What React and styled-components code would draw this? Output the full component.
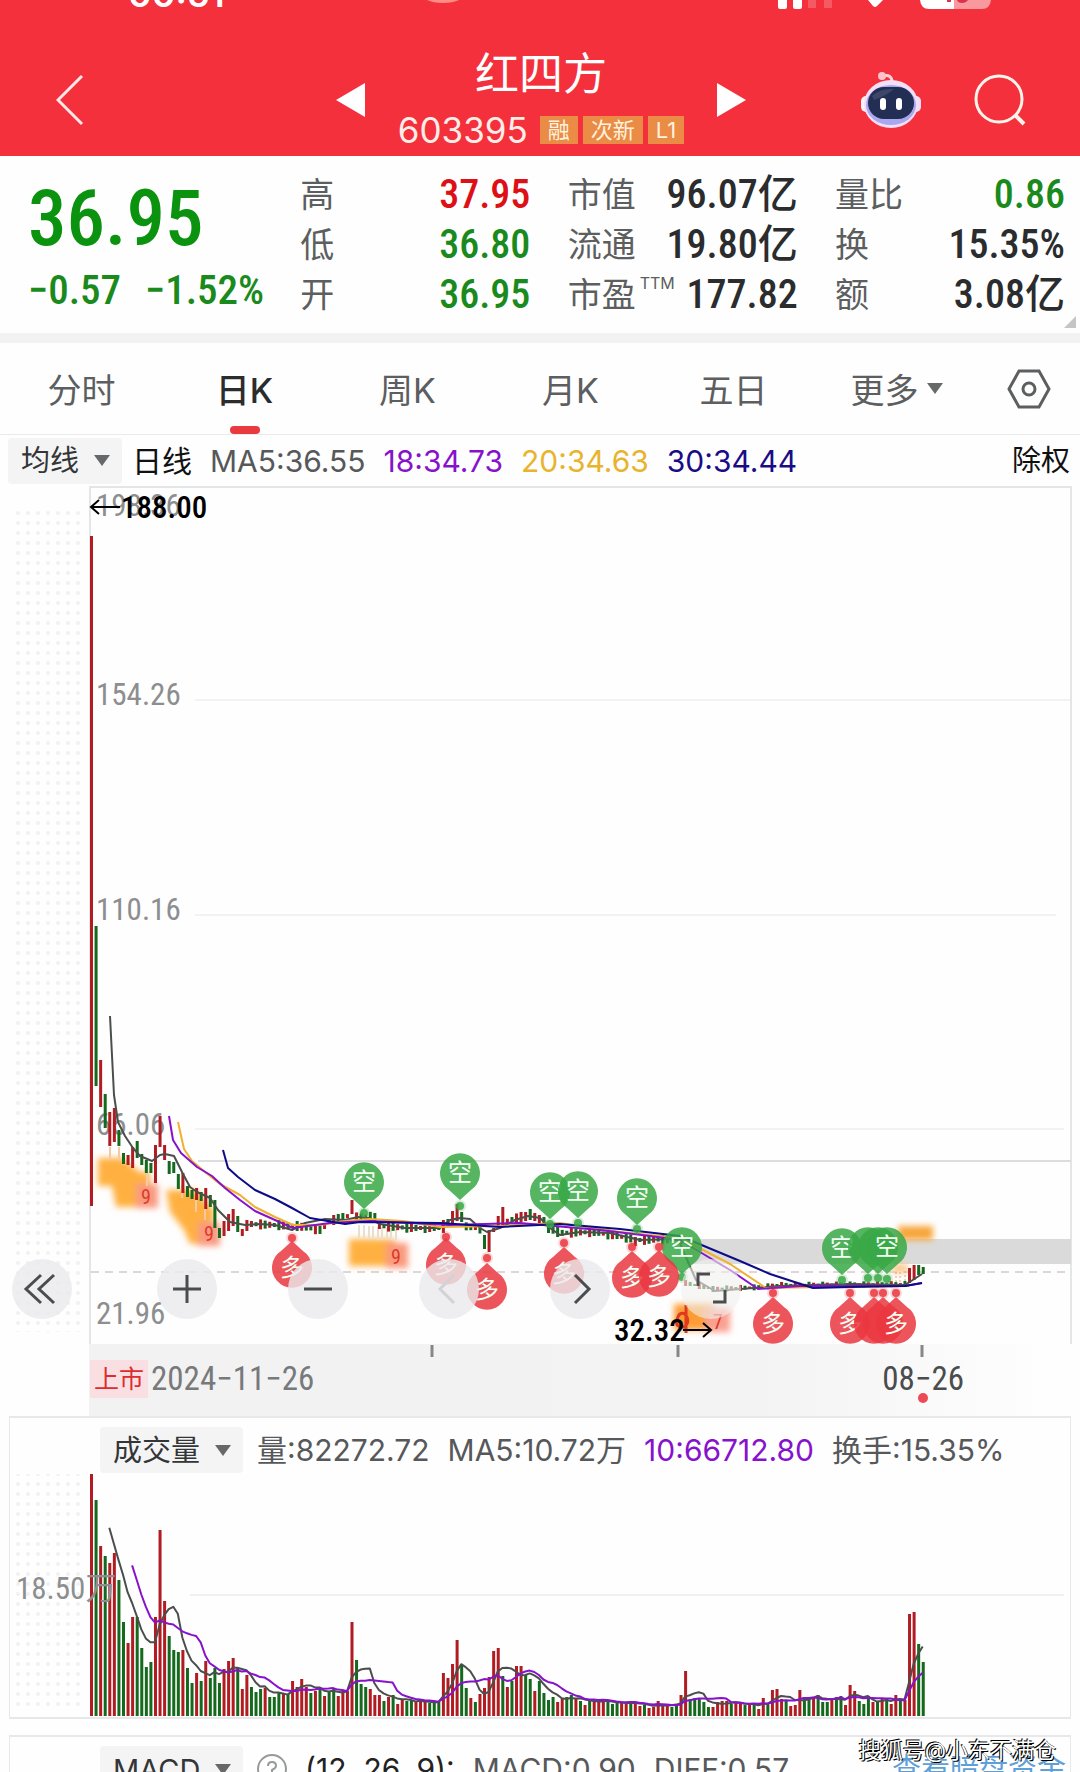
import React from "react";
import styled, { createGlobalStyle } from "styled-components";

const GlobalStyle = createGlobalStyle`
    * {
        box-sizing: border-box;
    }

    body {
        margin: 0;
        background: #fefefe;
        color: #4c4c4e;
        font-family: Inter, "Noto Sans CJK SC", sans-serif;
    }

    button,
    select {
        margin: 0;
        padding: 0;
        border: 0;
        background: none;
        color: inherit;
        font: inherit;
    }
`;

const RED = "#b01c22";
const GREEN = "#14691c";

const BAR_START = 91;
const BAR_STEP = 4.57;
const barX = (i) => BAR_START + i * BAR_STEP;

// high / low / colour of the first trading days
const firstDays = [
    [536, 1206, "r"], [926, 1086, "g"], [1060, 1107, "r"], [1094, 1128, "g"], [1112, 1146, "r"],
    [1108, 1142, "r"], [1130, 1146, "g"], [1153, 1164, "g"], [1155, 1165, "r"], [1147, 1168, "r"],
    [1141, 1158, "g"], [1154, 1165, "g"], [1160, 1173, "g"], [1163, 1173, "g"], [1145, 1183, "r"],
    [1116, 1147, "r"], [1145, 1160, "r"], [1161, 1174, "g"], [1162, 1173, "g"], [1174, 1189, "g"],
    [1173, 1193, "r"], [1186, 1197, "g"], [1190, 1199, "g"], [1188, 1200, "r"], [1192, 1201, "g"],
    [1188, 1209, "r"], [1195, 1207, "g"], [1200, 1228, "g"], [1228, 1238, "g"], [1221, 1236, "r"],
    [1214, 1231, "r"], [1209, 1226, "r"], [1216, 1232, "g"], [1229, 1236, "r"], [1220, 1231, "r"],
];

const specialDays = {
    57: [1200, 1214, "r"],
    77: [1220, 1233, "r"],
    79: [1211, 1223, "r"],
    80: [1204, 1221, "r"],
    81: [1212, 1222, "g"],
    86: [1235, 1249, "g"],
    87: [1230, 1252, "r"],
    89: [1216, 1227, "r"],
    90: [1207, 1225, "r"],
    94: [1212, 1222, "r"],
    95: [1212, 1221, "r"],
    96: [1209, 1220, "g"],
    97: [1213, 1221, "r"],
    100: [1225, 1233, "g"],
    102: [1227, 1237, "g"],
    119: [1237, 1246, "r"],
    179: [1268, 1283, "r"],
    180: [1265, 1280, "r"],
    181: [1265, 1275, "g"],
    182: [1267, 1274, "g"],
};

const trend = [
    [35, 1224], [45, 1226], [50, 1230], [52, 1222], [55, 1216], [62, 1217], [63, 1226], [70, 1228],
    [76, 1228], [78, 1223], [84, 1228], [88, 1230], [92, 1219], [96, 1217], [99, 1220], [102, 1233],
    [110, 1232], [120, 1240], [129, 1239], [130, 1283], [136, 1289], [147, 1287], [150, 1285], [179, 1284],
];

const trendAt = (i) => {
    const n = trend.findIndex(([day]) => day > i);
    const [d0, y0] = trend[Math.max(n - 1, 0)];
    const [d1, y1] = trend[n];
    return y0 + ((y1 - y0) * (i - d0)) / (d1 - d0);
};

const candles = Array.from({ length: 183 }, (_, i) => {
    if (i < firstDays.length) return firstDays[i];
    if (specialDays[i]) return specialDays[i];
    const mid = trendAt(i);
    const half = i < 130 ? 2 + ((i * 7) % 4) : 1 + ((i * 5) % 3);
    return [mid - half, mid + half, (i * 11) % 7 < 3 ? "r" : "g"];
});

// traded volume, one letter for the day's direction
const volumes = (
    "242r 216g 170r 160g 153r 163r 136g 94g 73r 99r 99g 68g 49g 54g 99r 186r 115r 80g 66g 64g 66r 48g 33g 43r 35g 55r " +
    "38g 48g 33g 47r 55r 58r 48g 27r 41r 29g 24g 27g 28r 19g 19g 24g 23r 22g 35r 29r 37r 29r 23g 25r 29g 20r 25g " +
    "27g 20r 25r 25r 94r 56g 32g 29g 27r 21r 21r 15g 19r 21g 12r 17r 15g 15g 14r 15r 14r 13g 13g 14g 43r 38r 52r " +
    "76r 50g 28g 18r 14g 22r 28r 39r 65r 68r 40g 29r 35g 50r 50r 41g 37g 25r 35g 23g 16g 19g 14r 17r 19g 21g 17r " +
    "15g 11r 15g 17r 15r 15r 14g 12g 13g 13r 13r 14g 13r 10r 11g 8r 9r 15r 11r 10r 9g 12g 21r 45r 17g 18g " +
    "18g 14g 9g 9r 14r 15r 15r 12g 13r 12r 11g 12r 12g 7r 18r 12g 26r 27r 17r 15g 10r 11r 26r 17g 18g 19r 21g 14g " +
    "14g 17r 19g 20g 11r 31r 25r 15g 12g 17g 14r 14g 18r 17g 12r 21r 17g 16r 102r 104r 72g 54g"
)
    .split(" ")
    .map((day) => ({ size: parseInt(day, 10), up: day.endsWith("r") }));

const VOLUME_BASE = 1715;

const volumeAverage = (days) =>
    volumes
        .map((_, i) => {
            if (i < days - 1) return null;
            const sum = volumes.slice(i - days + 1, i + 1).reduce((total, v) => total + v.size, 0);
            return `${barX(i).toFixed(1)},${(VOLUME_BASE - sum / days).toFixed(1)}`;
        })
        .filter(Boolean)
        .join(" ");

const averages = [
    {
        color: "#4a4f4c",
        points:
            "110,1016 114,1095 118,1122 125,1136 133,1148 140,1156 152,1161 160,1155 165,1154 174,1156 182,1172 190,1187 197,1192 210,1198 218,1210 230,1222 245,1225 260,1224 275,1225 292,1230 305,1223 325,1219 345,1220 358,1217 368,1218 380,1224 405,1228 440,1228 450,1220 460,1218 470,1219 480,1228 487,1232 500,1228 515,1220 528,1216 540,1218 550,1228 560,1235 580,1232 610,1233 640,1240 678,1239 696,1280 715,1291 740,1289 780,1286 810,1285 850,1284 905,1285 922,1274",
    },
    {
        color: "#f0b030",
        points:
            "178,1122 184,1149 192,1161 205,1172 220,1184 240,1195 255,1207 275,1217 293,1225 320,1225 345,1221 370,1219 403,1221 440,1227 500,1226 560,1223 620,1232 680,1238 730,1264 766,1288 820,1287 905,1286",
    },
    {
        color: "#8712cc",
        points:
            "169,1116 173,1140 181,1153 197,1167 212,1176 225,1188 240,1200 255,1211 275,1220 293,1228 330,1223 370,1221 450,1225 520,1223 600,1230 650,1236 680,1240 730,1270 758,1289 800,1286 905,1286 922,1283",
    },
    {
        color: "#0c0c86",
        points:
            "223,1150 228,1168 238,1177 255,1190 275,1199 292,1208 310,1218 345,1224 360,1222 440,1223 500,1227 560,1224 620,1229 680,1236 740,1261 770,1274 813,1288 850,1287 905,1286 922,1283",
    },
];

const bearPins = [
    [364, 1182, 1213], [460, 1173, 1206], [550, 1192, 1224], [578, 1191, 1223], [637, 1198, 1229],
    [682, 1247, 1277], [842, 1248, 1280], [868, 1247, 1278, true], [878, 1247, 1278, true], [887, 1247, 1279],
];

const bullPins = [
    [292, 1268, 1238], [446, 1265, 1237], [487, 1290, 1258], [564, 1274, 1243], [632, 1278, 1247], [659, 1277, 1247],
    [773, 1324, 1293], [850, 1324, 1293], [874, 1324, 1293, true], [883, 1324, 1293, true], [896, 1324, 1293],
];

const stats = [
    [
        { label: "高", value: "37.95", color: "#dc1016" },
        { label: "低", value: "36.80", color: "#1a8a1c" },
        { label: "开", value: "36.95", color: "#1a8a1c" },
    ],
    [
        { label: "市值", value: "96.07亿" },
        { label: "流通", value: "19.80亿" },
        { label: "市盈", note: "TTM", value: "177.82" },
    ],
    [
        { label: "量比", value: "0.86", color: "#1a8a1c" },
        { label: "换", value: "15.35%" },
        { label: "额", value: "3.08亿" },
    ],
];

const tabs = ["分时", "日K", "周K", "月K", "五日"];

const Pin = ({ x, y, dot, bull, plain }) => {
    const dir = bull ? -1 : 1;
    return (
        <g fill={bull ? "#ea3740" : "#38a845"} fillOpacity="0.85">
            <circle cx={x} cy={dot} r="6" fillOpacity="0.2" />
            <circle cx={x} cy={dot} r="4" />
            <path
                d={`M${x} ${y + dir * 27} L${x - 11} ${y + dir * 17} A20 20 0 1 ${bull ? 0 : 1} ${x + 11} ${y + dir * 17} Z`}
            />
            {!plain && (
                <PinText x={x} y={y + 8}>
                    {bull ? "多" : "空"}
                </PinText>
            )}
        </g>
    );
};

const Caret = () => (
    <svg width="16" height="11" viewBox="0 0 16 11" aria-hidden="true">
        <path d="M0 0H16L8 11Z" fill="#66686a" />
    </svg>
);

const Picker = ({ label, option }) => (
    <PickerWrapper>
        <select aria-label={label}>
            <option>{option}</option>
        </select>
        <Caret />
    </PickerWrapper>
);

const RobotIcon = () => (
    <svg width="62" height="58" viewBox="0 0 62 58" aria-hidden="true">
        <path d="M23 5Q32 3 32 11" fill="none" stroke="#ffd3d8" strokeWidth="3" />
        <circle cx="22" cy="5" r="4" fill="#ffc4cb" />
        <rect x="1" y="25" width="10" height="16" rx="5" fill="#fff0f6" />
        <rect x="51" y="25" width="10" height="16" rx="5" fill="#f1ddf8" />
        <ellipse cx="31" cy="33" rx="27" ry="24" fill="#f3dff6" />
        <ellipse cx="31" cy="34" rx="25" ry="20" fill="#a9a7ee" />
        <rect x="8" y="16" width="46" height="32" rx="16" fill="#222e54" />
        <path d="M12 25Q20 17 34 18Q26 25 14 29Z" fill="#3c4668" />
        <rect x="20" y="27" width="6" height="12" rx="3" fill="#fff" />
        <rect x="36" y="27" width="6" height="12" rx="3" fill="#fff" />
    </svg>
);

const Signals = () => (
    <svg width="216" height="9" viewBox="776 0 216 9" aria-hidden="true">
        <path d="M778 0H787V7Q787 9 785 9H780Q778 9 778 7ZM793 0H802V7Q802 9 800 9H795Q793 9 793 7Z" fill="#fff" />
        <path d="M808 0H816V8H808ZM824 0H832V8H824Z" fill="#fff" opacity="0.2" />
        <path d="M868 0H883L877 6Q875 8 873 6Z" fill="#fff" />
        <path d="M920 0H954V9H929Q921 9 920 0Z" fill="#fff" />
        <path d="M954 0H991Q990 9 982 9H954Z" fill="#fff" opacity="0.5" />
        <path d="M947 0H951V2H947ZM957 0H968Q966 3 962 3Q958 3 957 0Z" fill="#d9344c" />
    </svg>
);

const Recorder = () => (
    <svg width="32" height="4" viewBox="0 0 32 4" aria-hidden="true">
        <path d="M0 0H32Q26 3 16 3Q6 3 0 0Z" fill="#ff8d84" />
    </svg>
);

const PriceChart = () => (
    <ChartSvg viewBox="0 486 1080 858" role="img" aria-label="日K">
        <defs>
            <pattern id="dots" x="15" y="500" width="10" height="10" patternUnits="userSpaceOnUse">
                <circle cx="3" cy="3" r="2" fill="#f1f1f2" />
            </pattern>
            <filter id="soft" x="-20%" y="-20%" width="140%" height="140%">
                <feGaussianBlur stdDeviation="3" />
            </filter>
        </defs>
        <rect x="14" y="510" width="72" height="822" fill="url(#dots)" />
        <path d="M90 1344V487H1071V1344" fill="none" stroke="#e4e5e6" strokeWidth="2" />
        <path d="M195 700H1070M195 915H1056M195 1129H1064" stroke="#f3f1f2" strokeWidth="2" />
        <path d="M198 1161H1071" stroke="#dcdddd" strokeWidth="2" />
        <rect x="686" y="1239" width="385" height="25" fill="#dadada" />
        <path d="M91 1272H1070" stroke="#ddd7d7" strokeWidth="2" strokeDasharray="8 6" />

        <AxisText x="96" y="516">198.36</AxisText>
        <AxisText x="96" y="705">154.26</AxisText>
        <AxisText x="96" y="920">110.16</AxisText>
        <AxisText x="96" y="1135">66.06</AxisText>
        <AxisText x="96" y="1324">21.96</AxisText>

        <g filter="url(#soft)">
            <path d="M98 1158H122L140 1172H150V1207H116L112 1186H98Z" fill="#ffb040" />
            <rect x="136" y="1184" width="22" height="24" fill="#f99a80" />
            <path d="M166 1190H196L215 1212L206 1244H190L184 1230L170 1212Z" fill="#ffb040" />
            <rect x="198" y="1222" width="22" height="24" fill="#f99a80" />
            <rect x="349" y="1239" width="46" height="27" fill="#ffb040" />
            <rect x="386" y="1243" width="22" height="25" fill="#fa9a7c" />
            <rect x="674" y="1304" width="40" height="26" fill="#fd9c34" />
            <rect x="706" y="1308" width="24" height="24" fill="#f9a090" />
            <rect x="898" y="1226" width="35" height="14" fill="#f7a63a" />
            <rect x="892" y="1264" width="16" height="9" fill="#fbc78d" />
        </g>
        <path
            d="M110 1147V1160M119 1147V1160M147 1172V1186M156 1176V1186M196 1200V1212M205 1208V1220M182 1185V1198"
            stroke="#f6c9a4"
            strokeWidth="2"
        />
        <path
            d="M359 1225V1238M364 1225V1238M369 1226V1239M373 1226V1239M378 1227V1240M382 1227V1240M387 1228V1240M391 1228V1240M396 1229V1240"
            stroke="#e9dfce"
            strokeWidth="2"
        />
        <path
            d="M896 1272V1283M900 1272V1283M905 1271V1283"
            stroke="#e8a07a"
            strokeWidth="1"
            strokeDasharray="2 2"
        />
        <MarkText x="146" y="1204">9</MarkText>
        <MarkText x="209" y="1241">9</MarkText>
        <MarkText x="396" y="1264">9</MarkText>
        <MarkText x="718" y="1329">7</MarkText>
        <path
            d="M677 1320Q679 1311 685 1314Q691 1322 684 1327Q675 1328 677 1320M686 1305V1333"
            fill="none"
            stroke="#dd3a1e"
            strokeWidth="3"
        />

        {candles.map(([high, low, dir], i) => (
            <rect key={i} x={barX(i) - 1} y={high} width="3" height={low - high} fill={dir === "r" ? RED : GREEN} />
        ))}
        {averages.map((line) => (
            <polyline
                key={line.color}
                points={line.points}
                fill="none"
                stroke={line.color}
                strokeWidth="2"
                strokeLinejoin="round"
            />
        ))}
        {bearPins.map(([x, y, dot, plain]) => (
            <Pin key={x} x={x} y={y} dot={dot} plain={plain} />
        ))}
        {bullPins.map(([x, y, dot, plain]) => (
            <Pin key={x} x={x} y={y} dot={dot} plain={plain} bull />
        ))}

        <path d="M91 507H120M99 500L91 507L99 514" fill="none" stroke="#000" strokeWidth="2" />
        <PeakText x="121" y="518">188.00</PeakText>
        <path d="M683 1330H711M703 1323L711 1330L703 1337" fill="none" stroke="#000" strokeWidth="2" />
        <PeakText x="614" y="1341">32.32</PeakText>
    </ChartSvg>
);

const VolumeChart = () => (
    <ChartSvg viewBox="10 1473 1060 243" role="img" aria-label="成交量">
        <rect x="14" y="1473" width="72" height="236" fill="url(#dots)" />
        <path d="M190 1594H1064" stroke="#f3efef" strokeWidth="2" />
        {volumes.map((v, i) => (
            <rect
                key={i}
                x={barX(i) - 1}
                y={VOLUME_BASE - v.size}
                width="3"
                height={v.size}
                fill={v.up ? RED : GREEN}
            />
        ))}
        <AxisText x="16" y="1598">18.50万</AxisText>
        <polyline points={volumeAverage(5)} fill="none" stroke="#4a4f4c" strokeWidth="2" strokeLinejoin="round" />
        <polyline points={volumeAverage(10)} fill="none" stroke="#8712cc" strokeWidth="2" strokeLinejoin="round" />
    </ChartSvg>
);

const controls = [
    { label: "最早", d: "M24 11L9 25L24 39M37 11L22 25L37 39" },
    { label: "放大", d: "M25 11V39M11 25H39" },
    { label: "缩小", d: "M11 25H39" },
    { label: "上一段", d: "M30 11L16 25L30 39", faint: true },
    { label: "下一段", d: "M20 11L34 25L20 39" },
    { label: "全屏", d: "M12 22V10H24M39 26V38H27", bare: true },
];

const App = () => {
    const [tab, setTab] = React.useState("日K");

    return (
        <Page>
            <GlobalStyle />
            <Header>
                <StatusBar>
                    <Clock>00:51</Clock>
                    <Recorder />
                    <Signals />
                </StatusBar>
                <NavBar>
                    <IconButton aria-label="返回">
                        <svg width="28" height="52" viewBox="0 0 28 52">
                            <path d="M26 2L2 26L26 50" fill="none" stroke="#ffe9ea" strokeWidth="3" />
                        </svg>
                    </IconButton>
                    <Switcher>
                        <IconButton aria-label="上一只">
                            <svg width="30" height="34" viewBox="0 0 30 34">
                                <path d="M29 0V34L0 17Z" fill="#fff" />
                            </svg>
                        </IconButton>
                        <div>
                            <StockName>红四方</StockName>
                            <StockMeta>
                                <StockCode>603395</StockCode>
                                <Badge>融</Badge>
                                <Badge>次新</Badge>
                                <Badge>L1</Badge>
                            </StockMeta>
                        </div>
                        <IconButton aria-label="下一只">
                            <svg width="30" height="34" viewBox="0 0 30 34">
                                <path d="M1 0V34L30 17Z" fill="#fff" />
                            </svg>
                        </IconButton>
                    </Switcher>
                    <Actions>
                        <IconButton aria-label="助手">
                            <RobotIcon />
                        </IconButton>
                        <IconButton aria-label="搜索">
                            <svg width="52" height="52" viewBox="0 0 52 52">
                                <circle cx="25" cy="25" r="23" fill="none" stroke="#fff4ec" strokeWidth="3" />
                                <path d="M41 41L50 50" stroke="#fff4ec" strokeWidth="4" />
                            </svg>
                        </IconButton>
                    </Actions>
                </NavBar>
            </Header>

            <Quote>
                <PriceBlock>
                    <Price>36.95</Price>
                    <Change>
                        <span>−0.57</span>
                        <span>−1.52%</span>
                    </Change>
                </PriceBlock>
                {stats.map((column) => (
                    <StatColumn key={column[0].label}>
                        {column.map((stat) => (
                            <Stat key={stat.label}>
                                <dt>
                                    {stat.label}
                                    {stat.note && <Note>{stat.note}</Note>}
                                </dt>
                                <StatValue $color={stat.color}>{stat.value}</StatValue>
                            </Stat>
                        ))}
                    </StatColumn>
                ))}
                <Corner />
            </Quote>

            <Tabs>
                {tabs.map((name) => (
                    <Tab key={name} $active={name === tab} onClick={() => setTab(name)}>
                        {name}
                    </Tab>
                ))}
                <Tab>
                    更多
                    <Caret />
                </Tab>
                <Tab aria-label="设置">
                    <svg width="44" height="40" viewBox="0 0 44 40">
                        <path d="M12 2H32L42 20L32 38H12L2 20Z" fill="none" stroke="#5c5e60" strokeWidth="3" />
                        <circle cx="22" cy="20" r="6" fill="none" stroke="#5c5e60" strokeWidth="3" />
                    </svg>
                </Tab>
            </Tabs>

            <Indicators>
                <Picker label="指标" option="均线" />
                <Readings>
                    <Reading $color="#111">日线</Reading>
                    <Reading>MA5:36.55</Reading>
                    <Reading $color="#8712cc">18:34.73</Reading>
                    <Reading $color="#e8b42c">20:34.63</Reading>
                    <Reading $color="#1a0c86">30:34.44</Reading>
                </Readings>
                <AdjustButton>除权</AdjustButton>
            </Indicators>

            <ChartArea>
                <PriceChart />
                <Controls>
                    {controls.map((c) => (
                        <Control key={c.label} aria-label={c.label} $bare={c.bare}>
                            <svg width="50" height="50" viewBox="0 0 50 50">
                                <path d={c.d} fill="none" stroke={c.faint ? "#d2d2d4" : "#4a4c4e"} strokeWidth="3" />
                            </svg>
                        </Control>
                    ))}
                </Controls>
            </ChartArea>

            <DateAxis>
                <Ticks viewBox="0 0 1080 14" aria-hidden="true">
                    <path d="M432 1V13M678 1V13M922 1V13" stroke="#85888a" strokeWidth="3" />
                </Ticks>
                <Dates>
                    <ListedBadge>上市</ListedBadge>
                    <DateText>2024−11−26</DateText>
                    <LastDate>08−26</LastDate>
                </Dates>
            </DateAxis>

            <Panel>
                <PanelHead>
                    <Picker label="副图一" option="成交量" />
                    <Readings>
                        <Reading>量:82272.72</Reading>
                        <Reading>MA5:10.72万</Reading>
                        <Reading $color="#8712cc">10:66712.80</Reading>
                        <Reading>换手:15.35%</Reading>
                    </Readings>
                </PanelHead>
                <VolumeChart />
            </Panel>

            <MacdPanel>
                <PanelHead>
                    <Picker label="副图二" option="MACD" />
                    <Readings>
                        <IconButton aria-label="说明">
                            <svg width="30" height="30" viewBox="0 0 30 30" fill="none" stroke="#97999b" strokeWidth="2">
                                <circle cx="15" cy="15" r="14" />
                                <path d="M11 12Q11 8 15 8Q19 8 19 12Q19 14 15 16V19M15 21V23" />
                            </svg>
                        </IconButton>
                        <Reading $color="#222">(12, 26, 9):</Reading>
                        <Reading>MACD:0.90</Reading>
                        <Reading>DIFF:0.57</Reading>
                    </Readings>
                    <MoreLink href="#funds">查看暗盘资金</MoreLink>
                </PanelHead>
                <Watermark>搜狐号@小东不满仓</Watermark>
            </MacdPanel>
        </Page>
    );
};

const Page = styled.main`
    min-height: 100vh;
`;

const Header = styled.header`
    background: #f3303b;
    color: #fff;
`;

const StatusBar = styled.div`
    height: 12px;
    padding: 0 88px 0 128px;
    display: grid;
    grid-template-columns: 299px 1fr auto;
    grid-template-rows: 12px;
    align-items: start;
    overflow: hidden;
`;

const Clock = styled.span`
    align-self: end;
    font-size: 36px;
    line-height: 36px;
    font-weight: 600;
`;

const NavBar = styled.nav`
    height: 144px;
    padding: 31px 54px 0 56px;
    display: grid;
    grid-template-columns: 1fr 410px 1fr;
    align-items: center;
`;

const IconButton = styled.button`
    display: flex;
    align-items: center;
    cursor: pointer;
`;

const Switcher = styled.div`
    display: flex;
    align-items: center;
    justify-content: space-between;
`;

const StockName = styled.h1`
    margin: 0;
    font-size: 44px;
    line-height: 60px;
    font-weight: 400;
    text-align: center;
`;

const StockMeta = styled.div`
    display: flex;
    align-items: center;
    gap: 5px;
`;

const StockCode = styled.span`
    margin-right: 7px;
    font-size: 35px;
    line-height: 52px;
    color: #ffeee8;
`;

const Badge = styled.span`
    padding: 0 8px;
    font-size: 22px;
    line-height: 28px;
    color: #fff2dc;
    background: #ea8b46;
`;

const Actions = styled.div`
    display: flex;
    align-items: center;
    justify-content: flex-end;
    gap: 52px;
`;

const Quote = styled.section`
    position: relative;
    padding: 14px 15px 13px 28px;
    display: grid;
    grid-template-columns: 235px repeat(3, 230px);
    justify-content: space-between;
    border-bottom: 10px solid #f2f2f3;
`;

const PriceBlock = styled.div`
    font-family: "Roboto Condensed", Roboto, sans-serif;
    font-weight: 500;
    color: #0b930f;
`;

const Price = styled.div`
    font-size: 77px;
    line-height: 98px;
`;

const Change = styled.div`
    margin-top: 2px;
    display: flex;
    gap: 24px;
    font-size: 41px;
    line-height: 40px;
    color: #1a8a1c;
`;

const StatColumn = styled.dl`
    margin: 0;
`;

const Stat = styled.div`
    height: 50px;
    display: flex;
    align-items: center;
    justify-content: space-between;
    font-size: 34px;
    line-height: 50px;
    color: #5c5e60;
`;

const StatValue = styled.dd`
    margin: 0;
    font-family: "Roboto Condensed", Roboto, "Noto Sans CJK SC", sans-serif;
    font-size: 40px;
    font-weight: 500;
    color: ${(p) => p.$color || "#2a2c2e"};
`;

const Note = styled.sup`
    margin-left: 4px;
    font-size: 16px;
    line-height: 16px;
    vertical-align: 18px;
`;

const Corner = styled.span`
    position: absolute;
    right: 4px;
    bottom: 5px;
    border-left: 12px solid transparent;
    border-bottom: 12px solid #c4c5c6;
`;

const Tabs = styled.nav`
    height: 92px;
    display: grid;
    grid-template-columns: repeat(6, 163fr) 102fr;
    border-bottom: 1px solid #e9eaec;
`;

const Tab = styled.button`
    position: relative;
    display: flex;
    align-items: center;
    justify-content: center;
    gap: 8px;
    font-size: 34px;
    font-weight: ${(p) => (p.$active ? 500 : 400)};
    color: ${(p) => (p.$active ? "#2a2c2e" : "#5c5e60")};
    cursor: pointer;

    &::after {
        content: "";
        display: ${(p) => (p.$active ? "block" : "none")};
        position: absolute;
        bottom: 0;
        width: 30px;
        height: 8px;
        border-radius: 4px;
        background: #e93a3f;
    }
`;

const Indicators = styled.div`
    height: 51px;
    padding: 0 10px 0 8px;
    display: flex;
    align-items: center;
    gap: 10px;
`;

const Readings = styled.div`
    flex: 1;
    display: flex;
    gap: 18px;
`;

const Reading = styled.span`
    font-size: 30px;
    line-height: 44px;
    white-space: nowrap;
    color: ${(p) => p.$color || "#56585a"};
`;

const AdjustButton = styled.button`
    font-size: 29px;
    line-height: 44px;
    color: #111;
    cursor: pointer;
`;

const PickerWrapper = styled.label`
    height: 46px;
    padding: 0 12px 0 13px;
    display: flex;
    align-items: center;
    gap: 14px;
    border-radius: 4px;
    font-size: 29px;
    color: #333537;
    background: #f4f4f5;

    select {
        appearance: none;
        outline: 0;
    }
`;

const ChartArea = styled.section`
    position: relative;
`;

const ChartSvg = styled.svg`
    display: block;
    width: 100%;
    height: auto;
`;

const AxisText = styled.text`
    font-family: "Roboto Condensed", Roboto, "Noto Sans CJK SC", sans-serif;
    font-size: 31px;
    fill: #8c8e90;
`;

const PeakText = styled(AxisText)`
    font-weight: 500;
    fill: #000;
`;

const PinText = styled.text`
    font-family: "Noto Sans CJK SC", sans-serif;
    font-size: 24px;
    text-anchor: middle;
    fill: #f4fff4;
    fill-opacity: 1;
`;

const MarkText = styled.text`
    font-family: "Roboto Condensed", Roboto, sans-serif;
    font-size: 20px;
    text-anchor: middle;
    fill: #dd3a2a;
`;

const Controls = styled.div`
    position: absolute;
    left: 12px;
    bottom: 25px;
    display: flex;
    gap: 71px;
`;

const Control = styled.button`
    width: 60px;
    height: 60px;
    display: flex;
    align-items: center;
    justify-content: center;
    border-radius: 50%;
    background: ${(p) => (p.$bare ? "rgba(240, 240, 236, 0.6)" : "rgba(234, 234, 236, 0.8)")};
    cursor: pointer;

    &:first-child {
        margin-right: 14px;
    }
`;

const DateAxis = styled.div`
    height: 72px;
    background: linear-gradient(to right, #fefefe 89px, #f2f2f2 89px, #f3f3f4 70%, #fefefe 97%);
`;

const Ticks = styled.svg`
    display: block;
    width: 100%;
`;

const Dates = styled.div`
    padding: 2px 116px 0 90px;
    display: flex;
    align-items: center;
    gap: 3px;
`;

const ListedBadge = styled.span`
    padding: 0 4px;
    font-size: 25px;
    line-height: 38px;
    color: #dc2c30;
    background: #f9dfe2;
`;

const DateText = styled.time`
    flex: 1;
    font-family: "Roboto Condensed", Roboto, sans-serif;
    font-size: 33px;
    line-height: 38px;
    color: #77797b;
`;

const LastDate = styled(DateText)`
    position: relative;
    flex: none;
    color: #4a4c4e;

    &::after {
        content: "";
        position: absolute;
        left: 50%;
        bottom: -5px;
        width: 10px;
        height: 10px;
        margin-left: -5px;
        border-radius: 50%;
        background: #ec4a55;
    }
`;

const Panel = styled.section`
    position: relative;
    margin: 0 9px 16px;
    border: 2px solid #e8e8ea;
    border-left-width: 1px;
    border-right-width: 1px;
`;

const MacdPanel = styled(Panel)`
    margin-bottom: 0;
`;

const PanelHead = styled.div`
    height: 56px;
    padding: 8px 4px 0 90px;
    display: flex;
    align-items: center;
    gap: 14px;
`;

const MoreLink = styled.a`
    font-size: 29px;
    line-height: 44px;
    white-space: nowrap;
    color: #5e9fd8;
    text-decoration: none;
`;

const Watermark = styled.span`
    position: absolute;
    top: -2px;
    right: 14px;
    font-size: 22px;
    line-height: 30px;
    color: #fff;
    text-shadow: -1px -1px 0 #000, 1px 1px 0 #000;
`;

export default App;
